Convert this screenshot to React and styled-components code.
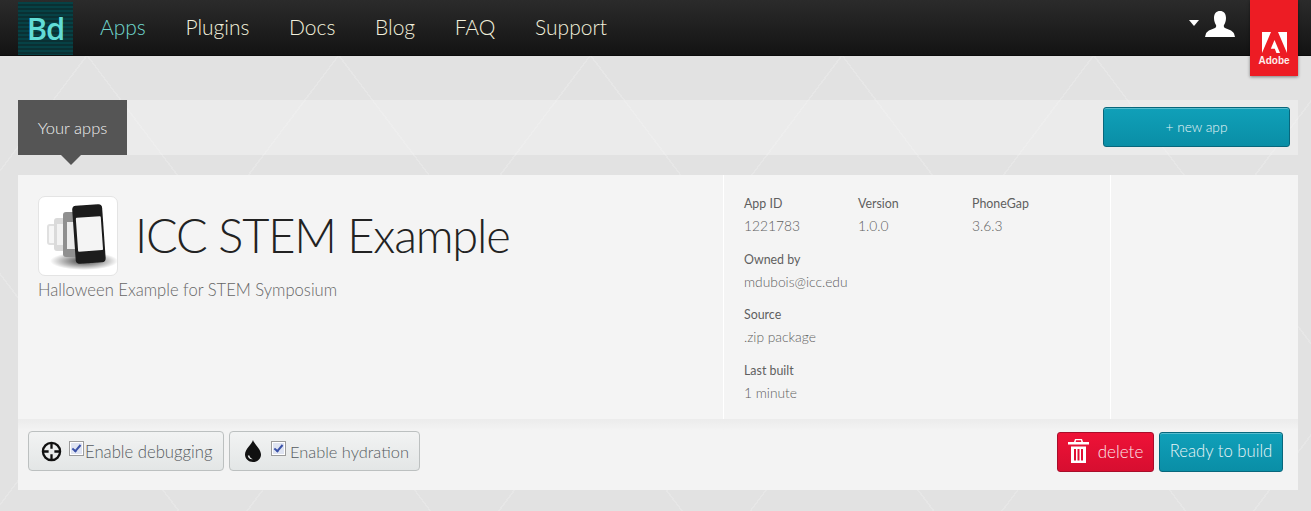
import React from "react";
import styled, { createGlobalStyle } from "styled-components";

const navItems = ["Apps", "Plugins", "Docs", "Blog", "FAQ", "Support"];

const App = () => {
  return (
    <Page>
      <GlobalStyle />
      <Header>
        <Logo>
          <LogoText>Bd</LogoText>
        </Logo>
        <Nav>
          {navItems.map((item, i) => (
            <NavLink key={item} $active={i === 0}>
              {item}
            </NavLink>
          ))}
        </Nav>
        <UserMenu>
          <Caret />
          <svg width="30" height="26" viewBox="0 0 30 26" fill="#fff">
            <path d="M15 0c3.600 0 6 2.600 6 7 0 3-1 5.500-2 7-.5 1 0 2.500 1 3 3 1.500 7 2 9 5.500l1 3.500H0l1-3.500c2-3.500 6-4 9-5.500 1-.5 1.500-2 1-3-1-1.500-2-4-2-7 0-4.400 2.400-7 6-7z" />
          </svg>
        </UserMenu>
        <AdobeBadge>
          <svg width="25" height="21" viewBox="0 0 25 21" fill="#fff">
            <path d="M0 0h9L0 21zM16 0h9v21zM12.500 8l5.500 13h-3.600l-1.600-4.200H8.800z" />
          </svg>
          <AdobeText>Adobe</AdobeText>
        </AdobeBadge>
      </Header>

      <Content>
        <Toolbar>
          <ToolbarTitle>Your apps</ToolbarTitle>
          <NewAppButton>+ new app</NewAppButton>
        </Toolbar>

        <Card>
          <CardMain>
            <AppSummary>
              <TitleRow>
                <AppIcon>
                  <svg width="78" height="78" viewBox="0 0 78 78">
                    <defs>
                      <radialGradient id="iconShadow" cx="50%" cy="50%" r="50%">
                        <stop offset="0%" stopColor="#000" stopOpacity=".75" />
                        <stop offset="100%" stopColor="#000" stopOpacity="0" />
                      </radialGradient>
                      <filter id="iconBlur">
                        <feGaussianBlur stdDeviation="0.7" />
                      </filter>
                    </defs>
                    <ellipse cx="45" cy="64" rx="34" ry="9" fill="url(#iconShadow)" />
                    <g filter="url(#iconBlur)">
                      <rect x="9" y="28" width="14" height="19" rx="2" fill="#f6f6f6" stroke="#e0e0e0" strokeWidth="2" />
                      <rect x="15" y="21" width="22" height="33" rx="3" fill="#dadada" />
                      <rect x="18" y="27" width="8" height="21" fill="#f2f2f2" />
                      <rect x="24" y="15" width="24" height="45" rx="3" fill="#8f8f8f" />
                      <rect x="28" y="25" width="16" height="27" fill="#ececec" />
                      <g transform="rotate(-4 50 38)">
                        <rect x="35" y="8" width="30" height="58" rx="4" fill="#1a1a1a" />
                        <rect x="38" y="20" width="25" height="34" rx="1" fill="#f4f4f4" />
                      </g>
                    </g>
                  </svg>
                </AppIcon>
                <AppTitle>ICC STEM Example</AppTitle>
              </TitleRow>
              <AppDescription>Halloween Example for STEM Symposium</AppDescription>
            </AppSummary>

            <AppMeta>
              <MetaRow>
                <MetaItem $width="114px">
                  <MetaLabel>App ID</MetaLabel>
                  <MetaValue>1221783</MetaValue>
                </MetaItem>
                <MetaItem $width="114px">
                  <MetaLabel>Version</MetaLabel>
                  <MetaValue>1.0.0</MetaValue>
                </MetaItem>
                <MetaItem>
                  <MetaLabel>PhoneGap</MetaLabel>
                  <MetaValue>3.6.3</MetaValue>
                </MetaItem>
              </MetaRow>
              <MetaRow>
                <MetaItem>
                  <MetaLabel>Owned by</MetaLabel>
                  <MetaValue>mdubois@icc.edu</MetaValue>
                </MetaItem>
              </MetaRow>
              <MetaRow>
                <MetaItem>
                  <MetaLabel>Source</MetaLabel>
                  <MetaValue>.zip package</MetaValue>
                </MetaItem>
              </MetaRow>
              <MetaRow>
                <MetaItem>
                  <MetaLabel>Last built</MetaLabel>
                  <MetaValue>1 minute</MetaValue>
                </MetaItem>
              </MetaRow>
            </AppMeta>

            <CardAside />
          </CardMain>

          <CardFooter>
            <ToggleGroup>
              <ToggleButton $width="196px">
                <svg width="21" height="21" viewBox="0 0 22 22" fill="none" stroke="#111">
                  <circle cx="11" cy="11" r="9" strokeWidth="2.400" />
                  <path d="M11 2v6M11 14v6M2 11h6M14 11h6" strokeWidth="2.400" />
                </svg>
                <CheckBox type="checkbox" defaultChecked />
                <ToggleLabel>Enable debugging</ToggleLabel>
              </ToggleButton>
              <ToggleButton $width="191px" $indent="15px">
                <svg width="16" height="22" viewBox="0 0 16 22" fill="#111">
                  <path d="M8 0c1 4 8 9 8 14.500C16 18.800 12.500 22 8 22s-8-3.200-8-7.500C0 9 7 4 8 0z" />
                  <path d="M2.800 15.500c.3 2.500 2.200 4 5 3.700-1.800-.8-3-2-3.400-3.700z" fill="#e8eaea" />
                </svg>
                <CheckBox type="checkbox" defaultChecked $gap />
                <ToggleLabel $gap>Enable hydration</ToggleLabel>
              </ToggleButton>
            </ToggleGroup>
            <ActionGroup>
              <DeleteButton>
                <svg width="21" height="24" viewBox="0 0 21 24" fill="#fff">
                  <path
                    d="M7 0h7l1 3h6v2.500H0V3h6zM8 1.300L7.700 3h5.600L13 1.300zM3 7.500h15V24H3zM6 10v11.500h2V10zM9.500 10v11.500h2V10zM13 10v11.500h2V10z"
                    fillRule="evenodd"
                  />
                </svg>
                delete
              </DeleteButton>
              <BuildButton>Ready to build</BuildButton>
            </ActionGroup>
          </CardFooter>
        </Card>
      </Content>
    </Page>
  );
};

export default App;

const GlobalStyle = createGlobalStyle`
  html, body {
    margin: 0;
    padding: 0;
    height: 100%;
  }

  body {
    font-family: "Lato", "Liberation Sans", sans-serif;
    font-weight: 300;
    overflow: hidden;
  }
`;

const Page = styled.div`
  width: 100%;
  height: 511px;
  overflow: hidden;
  background-color: #e2e2e2;
  background-image:
    repeating-linear-gradient(53deg, transparent 0 142px, rgba(255, 255, 255, 0.16) 142px 143.5px, transparent 143.5px 201px),
    repeating-linear-gradient(-53deg, transparent 0 45px, rgba(255, 255, 255, 0.16) 45px 46.5px, transparent 46.5px 201px);
`;

const Header = styled.header`
  position: relative;
  height: 56px;
  display: flex;
  align-items: center;
  padding-left: 18px;
  box-sizing: border-box;
  background: linear-gradient(#2b2b2b, #131313);
  border-bottom: 1px solid #0c0c0c;
`;

const Logo = styled.div`
  width: 55px;
  height: 53px;
  margin-top: 1px;
  display: flex;
  align-items: center;
  justify-content: center;
  background: repeating-linear-gradient(#064145 0 2px, #0a3033 2px 4px);
`;

const LogoText = styled.span`
  color: #62dcd6;
  font-family: "Open Sans", sans-serif;
  font-size: 31px;
  font-weight: 600;
  letter-spacing: -1px;
`;

const Nav = styled.nav`
  display: flex;
  gap: 39.6px;
  margin: -3px 0 0 27px;
`;

const NavLink = styled.a`
  color: ${(p) => (p.$active ? "#6fd6cd" : "#f2f0dc")};
  font-size: 21px;
  font-weight: 300;
`;

const UserMenu = styled.div`
  margin-left: auto;
  margin-right: 76px;
  margin-top: -7px;
  display: flex;
  align-items: center;
  gap: 6px;
`;

const Caret = styled.span`
  width: 0;
  height: 0;
  margin-top: -3px;
  border-left: 5px solid transparent;
  border-right: 5px solid transparent;
  border-top: 6px solid #fff;
`;

const AdobeBadge = styled.div`
  position: absolute;
  top: 0;
  left: 1250px;
  width: 48px;
  height: 76px;
  padding-top: 32px;
  box-sizing: border-box;
  display: flex;
  flex-direction: column;
  align-items: center;
  background: #ed1c24;
  box-shadow: 0 1px 3px rgba(0, 0, 0, 0.45);
`;

const AdobeText = styled.span`
  color: #fdecec;
  font-family: "Liberation Sans Narrow", "Liberation Sans", sans-serif;
  font-size: 10px;
  font-weight: 700;
  margin-top: 2px;
`;

const Content = styled.main`
  width: 1280px;
  margin-left: 18px;
  padding-top: 44px;
`;

const Toolbar = styled.div`
  height: 55px;
  display: flex;
  align-items: flex-start;
  justify-content: space-between;
  padding-right: 8px;
  box-sizing: border-box;
  background: rgba(255, 255, 255, 0.3);
`;

const ToolbarTitle = styled.div`
  position: relative;
  width: 109px;
  height: 55px;
  display: flex;
  align-items: center;
  justify-content: center;
  color: #f0f0f0;
  font-size: 16.5px;
  background: #555;

  &::after {
    content: "";
    position: absolute;
    left: 43px;
    bottom: -10px;
    border-left: 10px solid transparent;
    border-right: 10px solid transparent;
    border-top: 10px solid #555;
  }
`;

const TealButton = styled.button`
  border: 1px solid #08677c;
  border-radius: 3px;
  color: #e9f5f7;
  font-family: inherit;
  font-weight: 300;
  white-space: nowrap;
  padding: 0 0 2px;
  background: linear-gradient(#10a0b9, #0a8ea6);
  box-shadow: inset 0 1px 0 rgba(255, 255, 255, 0.3);
`;

const NewAppButton = styled(TealButton)`
  width: 187px;
  height: 40px;
  margin-top: 7px;
  font-size: 13.7px;
`;

const Card = styled.section`
  margin-top: 20px;
  background: #f4f4f4;
`;

const CardMain = styled.div`
  height: 245px;
  display: grid;
  grid-template-columns: 705px 388px 1fr;
  border-bottom: 1px solid #ececec;
  box-sizing: border-box;
`;

const AppSummary = styled.div`
  padding: 21px 20px 0;
`;

const TitleRow = styled.div`
  display: flex;
  align-items: center;
  gap: 17px;
`;

const AppIcon = styled.div`
  width: 80px;
  height: 80px;
  box-sizing: border-box;
  border: 1px solid #e4e4e4;
  border-radius: 7px;
  background: #fff;
  overflow: hidden;
`;

const AppTitle = styled.h1`
  margin: -2px 0 0;
  color: #222;
  font-size: 47px;
  font-weight: 300;
  letter-spacing: -1.2px;
`;

const AppDescription = styled.p`
  margin: 4px 0 0;
  color: #666;
  font-size: 16.6px;
  font-weight: 300;
`;

const AppMeta = styled.div`
  padding: 21px 20px 0;
  border-left: 1px solid #fff;
  border-right: 1px solid #fff;
`;

const MetaRow = styled.div`
  display: flex;
  height: 55.5px;
`;

const MetaItem = styled.div`
  width: ${(p) => p.$width || "auto"};
`;

const MetaLabel = styled.div`
  color: #5f5f5f;
  font-size: 12.4px;
  font-weight: 400;
  line-height: 16px;
`;

const MetaValue = styled.div`
  margin-top: 5px;
  color: #5f5f5f;
  font-size: 13.8px;
  line-height: 17px;
`;

const CardAside = styled.div``;

const CardFooter = styled.div`
  height: 70px;
  padding: 12px 15px 0 10px;
  box-sizing: border-box;
  display: flex;
  justify-content: space-between;
  align-items: flex-start;
  background: linear-gradient(#ececec, #f3f3f3 10px);
`;

const ToggleGroup = styled.div`
  display: flex;
  gap: 5px;
  margin-top: -1px;
`;

const ToggleButton = styled.label`
  width: ${(p) => p.$width};
  height: 40px;
  box-sizing: border-box;
  display: flex;
  align-items: center;
  padding-left: ${(p) => p.$indent || "12px"};
  border: 1px solid #bcc0c0;
  border-radius: 4px;
  background: linear-gradient(#f2f3f3, #e3e6e6);
`;

const CheckBox = styled.input`
  appearance: none;
  position: relative;
  width: 15px;
  height: 15px;
  box-sizing: border-box;
  margin: -5px 0 0 ${(p) => (p.$gap ? "10px" : "7px")};
  border: 1px solid #9c9c9c;
  box-shadow: inset 0 0 0 1px #fff;
  background: #dfe4f2;

  &::after {
    content: "";
    position: absolute;
    left: 4px;
    top: 1px;
    width: 3px;
    height: 7px;
    border: solid #3b52a8;
    border-width: 0 2px 2px 0;
    transform: rotate(40deg);
  }
`;

const ToggleLabel = styled.span`
  margin: 1px 0 0 ${(p) => (p.$gap ? "4px" : "1px")};
  color: #555b60;
  font-size: ${(p) => (p.$gap ? "16.4px" : "16.7px")};
`;

const ActionGroup = styled.div`
  display: flex;
  gap: 5px;
`;

const DeleteButton = styled.button`
  width: 97px;
  height: 40px;
  display: flex;
  align-items: center;
  justify-content: center;
  gap: 9px;
  padding: 0 0 2px;
  border: 1px solid #a80d2a;
  border-radius: 3px;
  color: #fbe6ea;
  font-family: inherit;
  font-size: 17px;
  font-weight: 300;
  background: linear-gradient(#ee1237, #d70e30);
`;

const BuildButton = styled(TealButton)`
  width: 124px;
  height: 40px;
  font-size: 16.7px;
`;
